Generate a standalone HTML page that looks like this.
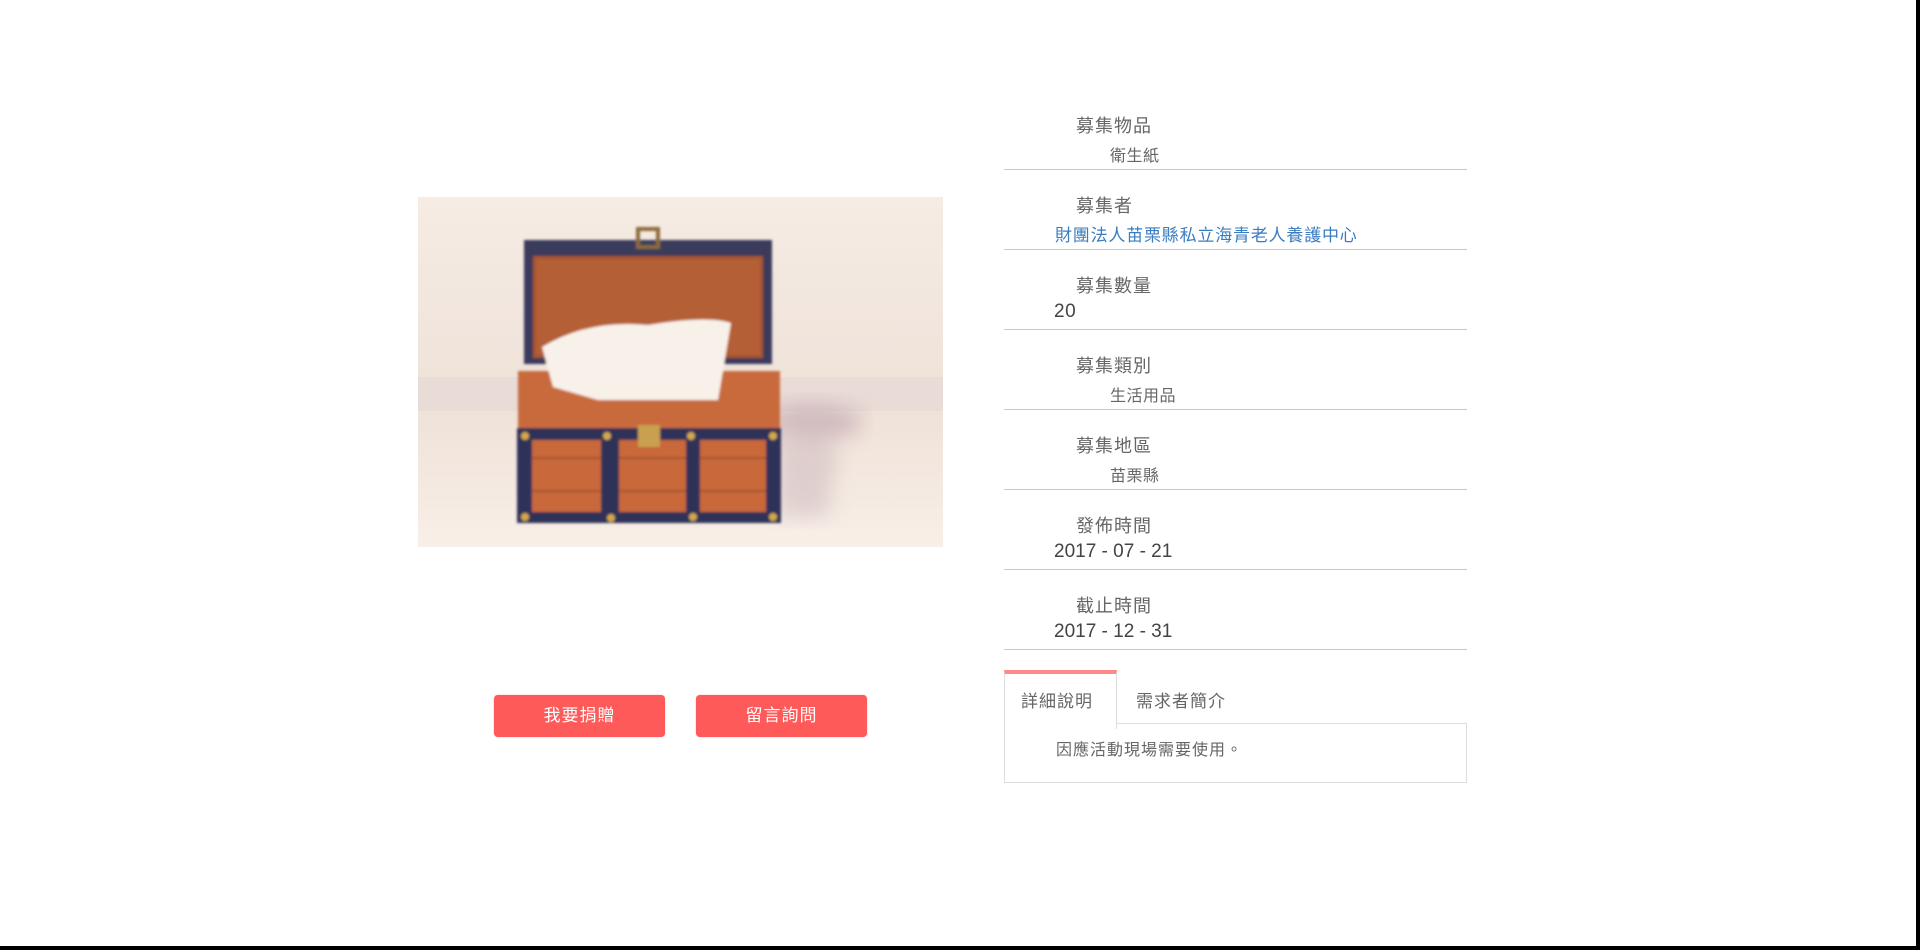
<!DOCTYPE html>
<html><head><meta charset="utf-8"><style>
html,body{margin:0;padding:0;}
body{width:1920px;height:950px;position:relative;background:#fff;overflow:hidden;font-family:"Liberation Sans","Noto Sans CJK TC",sans-serif;color:#666;}
.edgeR{position:absolute;left:1916px;top:0;width:4px;height:950px;background:#000;}
.edgeB{position:absolute;left:0;top:946px;width:1920px;height:4px;background:#000;}
.img{position:absolute;left:418px;top:197px;width:525px;height:350px;}
.row{position:absolute;left:1004px;width:463px;height:80px;border-bottom:1px solid #c8c8c8;}
.lbl{position:absolute;left:72px;font-size:18px;letter-spacing:1px;color:#666;}
.val{position:absolute;font-size:17px;letter-spacing:.5px;color:#666;}
.btn{position:absolute;top:695px;width:171px;height:42px;background:#ff5a5a;border-radius:4px;color:#fff;font-size:17px;text-align:center;line-height:42px;letter-spacing:1px;box-shadow:0 0 1px #d88;}
.tab{position:absolute;font-size:17px;color:#666;letter-spacing:1px;}
</style></head><body>
<svg class="img" viewBox="0 0 525 350" xmlns="http://www.w3.org/2000/svg">
<defs><linearGradient id="w" x1="0" y1="0" x2="0" y2="1"><stop offset="0" stop-color="#f6ece4"/><stop offset="1" stop-color="#efe3da"/></linearGradient>
<linearGradient id="f" x1="0" y1="0" x2="0" y2="1"><stop offset="0" stop-color="#efe2d8"/><stop offset="1" stop-color="#f8efe8"/></linearGradient>
<filter id="b"><feGaussianBlur stdDeviation="10"/></filter><filter id="s"><feGaussianBlur stdDeviation="1.2"/></filter></defs>
<rect width="525" height="182" fill="url(#w)"/>
<rect y="180" width="525" height="36" fill="#e9dbd6"/>
<rect y="214" width="525" height="136" fill="url(#f)"/>
<g filter="url(#b)" opacity=".55"><ellipse cx="395" cy="225" rx="50" ry="18" fill="#b89aa8"/><path d="M360 230 L420 250 L410 320 L360 320Z" fill="#cdb9bd"/></g>
<g filter="url(#s)">
<rect x="106" y="43" width="248" height="124" fill="#3a3a5c"/>
<rect x="115" y="59" width="230" height="102" fill="#a7542e"/>
<rect x="118" y="62" width="224" height="96" fill="#b45e34"/>
<rect x="220" y="32" width="20" height="18" fill="none" stroke="#8a6a3a" stroke-width="4"/>
<rect x="100" y="174" width="262" height="57" fill="#c96a3c"/>
<path d="M124 150 Q170 122 230 128 Q290 118 313 126 L300 203 L180 203 L135 190Z" fill="#f8f1ea"/>
<rect x="99" y="231" width="264" height="95" fill="#c8683b"/>
<rect x="114" y="260" width="234" height="2" fill="#a85530"/>
<rect x="114" y="293" width="234" height="2" fill="#a85530"/>
<rect x="99" y="231" width="264" height="12" fill="#2d3058"/>
<rect x="99" y="315" width="264" height="11" fill="#2d3058"/>
<rect x="99" y="231" width="15" height="95" fill="#2d3058"/>
<rect x="348" y="231" width="15" height="95" fill="#2d3058"/>
<rect x="183" y="231" width="18" height="95" fill="#2d3058"/>
<rect x="268" y="231" width="14" height="95" fill="#2d3058"/>
<rect x="220" y="228" width="22" height="22" fill="#c9a050"/>
<g fill="#d4a848"><circle cx="107" cy="239" r="4"/><circle cx="189" cy="239" r="4"/><circle cx="273" cy="239" r="4"/><circle cx="355" cy="239" r="4"/><circle cx="107" cy="320" r="4"/><circle cx="193" cy="321" r="4"/><circle cx="275" cy="320" r="4"/><circle cx="355" cy="320" r="4"/></g>
</g>
</svg>

<div class="row" style="top:89px"><span class="lbl" style="top:23px">募集物品</span><span class="val" style="left:106px;top:53px;font-size:16px">衛生紙</span></div>
<div class="row" style="top:169px"><span class="lbl" style="top:23px">募集者</span><span class="val" style="left:51px;top:52px;color:#3a7cc0;letter-spacing:.8px">財團法人苗栗縣私立海青老人養護中心</span></div>
<div class="row" style="top:249px"><span class="lbl" style="top:23px">募集數量</span><span class="val" style="left:50px;top:52px;font-size:19px;color:#444">20</span></div>
<div class="row" style="top:329px"><span class="lbl" style="top:23px">募集類別</span><span class="val" style="left:106px;top:53px;font-size:16px">生活用品</span></div>
<div class="row" style="top:409px"><span class="lbl" style="top:23px">募集地區</span><span class="val" style="left:106px;top:53px;font-size:16px">苗栗縣</span></div>
<div class="row" style="top:489px"><span class="lbl" style="top:23px">發佈時間</span><span class="val" style="left:50px;top:52px;font-size:19px;color:#444;letter-spacing:0">2017 - 07 - 21</span></div>
<div class="row" style="top:569px"><span class="lbl" style="top:23px">截止時間</span><span class="val" style="left:50px;top:52px;font-size:19px;color:#444;letter-spacing:0">2017 - 12 - 31</span></div>

<div class="btn" style="left:494px">我要捐贈</div>
<div class="btn" style="left:696px">留言詢問</div>

<div style="position:absolute;left:1004px;top:723px;width:461px;height:58px;border:1px solid #ddd;"></div>
<div style="position:absolute;left:1004px;top:670px;width:111px;height:55px;border:1px solid #ddd;border-bottom:none;border-top:4px solid #f88;background:#fff;"></div>
<span class="tab" style="left:1021px;top:687px">詳細說明</span>
<span class="tab" style="left:1136px;top:687px">需求者簡介</span>
<span class="tab" style="left:1056px;top:736px;font-size:16px">因應活動現場需要使用。</span>

<div class="edgeR"></div><div class="edgeB"></div>
</body></html>
